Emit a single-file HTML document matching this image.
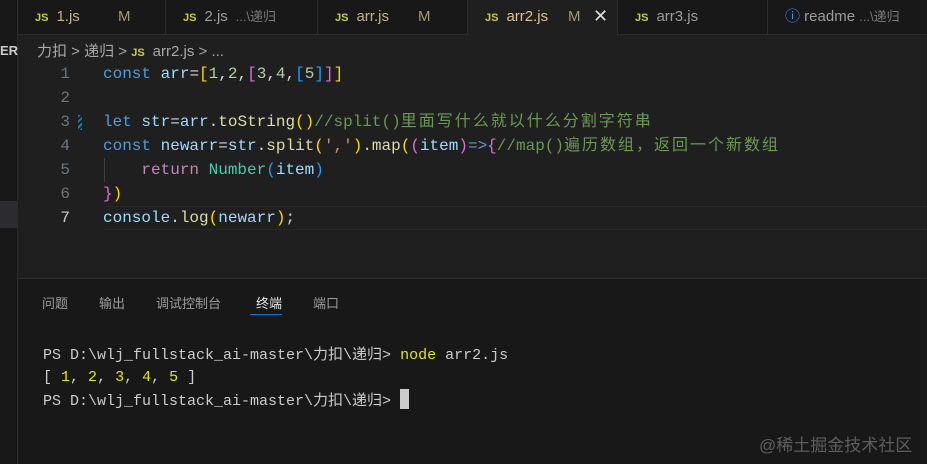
<!DOCTYPE html>
<html><head><meta charset="utf-8"><style>
*{margin:0;padding:0;box-sizing:border-box}
body{width:927px;height:464px;overflow:hidden;background:#1f1f1f;position:relative;font-family:"Liberation Sans","Noto Sans CJK SC",sans-serif}
.abs{position:absolute;white-space:pre}
#left{left:0;top:0;width:18px;height:464px;background:#181818;border-right:1px solid #2b2b2b}
#tabs{left:18px;top:0;width:909px;height:35px;background:#181818;border-bottom:1px solid #2b2b2b}
.tab{position:absolute;top:0;height:35px;border-right:1px solid #2b2b2b;font-size:15px;color:#9d9d9d;line-height:33px}
.js{color:#cbcb41;font-weight:bold;font-size:11px;margin-right:8px}
.m{color:#a8977a}
.mono{font-family:"Liberation Mono","Noto Sans CJK SC",monospace}
.code{font-size:16px;line-height:24px;left:103px;color:#d4d4d4}
.ln{left:40px;width:30px;text-align:right;font-size:16px;line-height:24px;color:#6e7681}
.kw{color:#569cd6}.v{color:#9cdcfe}.f{color:#dcdcaa}.y{color:#ffd700}.p{color:#da70d6}.b{color:#179fff}.n{color:#b5cea8}.c{color:#6a9955}.s{color:#ce9178}.r{color:#c586c0}.t{color:#4ec9b0}
.cj{letter-spacing:2px}
#panel{left:18px;top:278px;width:909px;height:186px;background:#181818;border-top:1px solid #2b2b2b}
.pt{position:absolute;top:293px;font-size:13px;color:#9d9d9d}
.term{left:43px;font-size:15px;line-height:22px;color:#cccccc}
</style></head><body>
<div class="abs" id="left"></div>
<div class="abs" style="left:0;top:43px;font-size:13px;font-weight:bold;color:#ccc">ER</div>
<div class="abs" style="left:0;top:201px;width:17px;height:27px;background:#2c2c30"></div>
<div class="abs" id="tabs">
 <div class="tab" style="left:0;width:148px;padding-left:17px"><span class="js">JS</span><span style="color:#c8b08a">1.js</span><span class="m" style="position:absolute;left:100px">M</span></div>
 <div class="tab" style="left:148px;width:152px;padding-left:17px"><span class="js">JS</span>2.js <span style="font-size:13px;color:#7a7a7a"> ...\递归</span></div>
 <div class="tab" style="left:300px;width:150px;padding-left:17px"><span class="js">JS</span><span style="color:#c8b08a">arr.js</span><span class="m" style="position:absolute;left:100px">M</span></div>
 <div class="tab" style="left:450px;width:150px;padding-left:17px;background:#1f1f1f;height:36px"><span class="js">JS</span><span style="color:#e2c08d">arr2.js</span><span class="m" style="position:absolute;left:100px">M</span><span style="position:absolute;left:125px;color:#ddd;font-size:18px">✕</span></div>
 <div class="tab" style="left:600px;width:150px;padding-left:17px"><span class="js">JS</span>arr3.js</div>
 <div class="tab" style="left:750px;width:170px;padding-left:17px;border:none"><span style="color:#3794ff">ⓘ</span> readme <span style="font-size:13px;color:#7a7a7a">...\递归</span></div>
</div>
<div class="abs" style="left:37px;top:40px;font-size:15px;color:#a9a9a9">力扣 &gt; 递归 &gt; <span class="js">JS</span>arr2.js &gt; ...</div>

<div class="abs" style="left:103px;top:206px;width:824px;height:24px;border-top:1px solid #282828;border-bottom:1px solid #282828"></div>
<div class="abs" style="left:78px;top:115px;width:4px;height:15px;background:repeating-linear-gradient(135deg,#1b81a8 0 2px,transparent 2px 4px)"></div>
<div class="abs" style="left:104px;top:158px;width:1px;height:24px;background:#404040"></div>

<div class="abs ln mono" style="top:62px">1
2
3
4
5
6
<span style="color:#ccc">7</span></div>
<div class="abs code mono" style="top:62px"><span class="kw">const</span> <span class="v">arr</span>=<span class="y">[</span><span class="n">1</span>,<span class="n">2</span>,<span class="p">[</span><span class="n">3</span>,<span class="n">4</span>,<span class="b">[</span><span class="n">5</span><span class="b">]</span><span class="p">]</span><span class="y">]</span>

<span class="kw">let</span> <span class="v">str</span>=<span class="v">arr</span>.<span class="f">toString</span><span class="y">()</span><span class="c">//split()<span class="cj">里面写什么就以什么分割字符串</span></span>
<span class="kw">const</span> <span class="v">newarr</span>=<span class="v">str</span>.<span class="f">split</span><span class="y">(</span><span class="s">','</span><span class="y">)</span>.<span class="f">map</span><span class="y">(</span><span class="p">(</span><span class="v">item</span><span class="p">)</span><span class="kw">=&gt;</span><span class="p">{</span><span class="c">//map()<span class="cj">遍历数组，返回一个新数组</span></span>
    <span class="r">return</span> <span class="t">Number</span><span class="b">(</span><span class="v">item</span><span class="b">)</span>
<span class="p">}</span><span class="y">)</span>
<span class="v">console</span>.<span class="f">log</span><span class="y">(</span><span class="v">newarr</span><span class="y">)</span>;</div>

<div class="abs" id="panel"></div>
<div class="pt" style="left:42px">问题</div>
<div class="pt" style="left:99px">输出</div>
<div class="pt" style="left:156px">调试控制台</div>
<div class="pt" style="left:256px;color:#e7e7e7">终端</div>
<div class="abs" style="left:250px;top:314px;width:32px;height:1px;background:#0078d4"></div>
<div class="pt" style="left:313px">端口</div>

<div class="abs term mono" style="top:345px">PS D:\wlj_fullstack_ai-master\力扣\递归&gt; <span style="color:#e5e510">node</span> arr2.js
[ <span style="color:#e5e510">1</span>, <span style="color:#e5e510">2</span>, <span style="color:#e5e510">3</span>, <span style="color:#e5e510">4</span>, <span style="color:#e5e510">5</span> ]
PS D:\wlj_fullstack_ai-master\力扣\递归&gt; <span style="display:inline-block;width:9px;height:20px;background:#ccc;vertical-align:-4px"></span></div>

<div class="abs" style="left:759px;top:431px;font-size:17px;color:#5e5e5e">@稀土掘金技术社区</div>
</body></html>
